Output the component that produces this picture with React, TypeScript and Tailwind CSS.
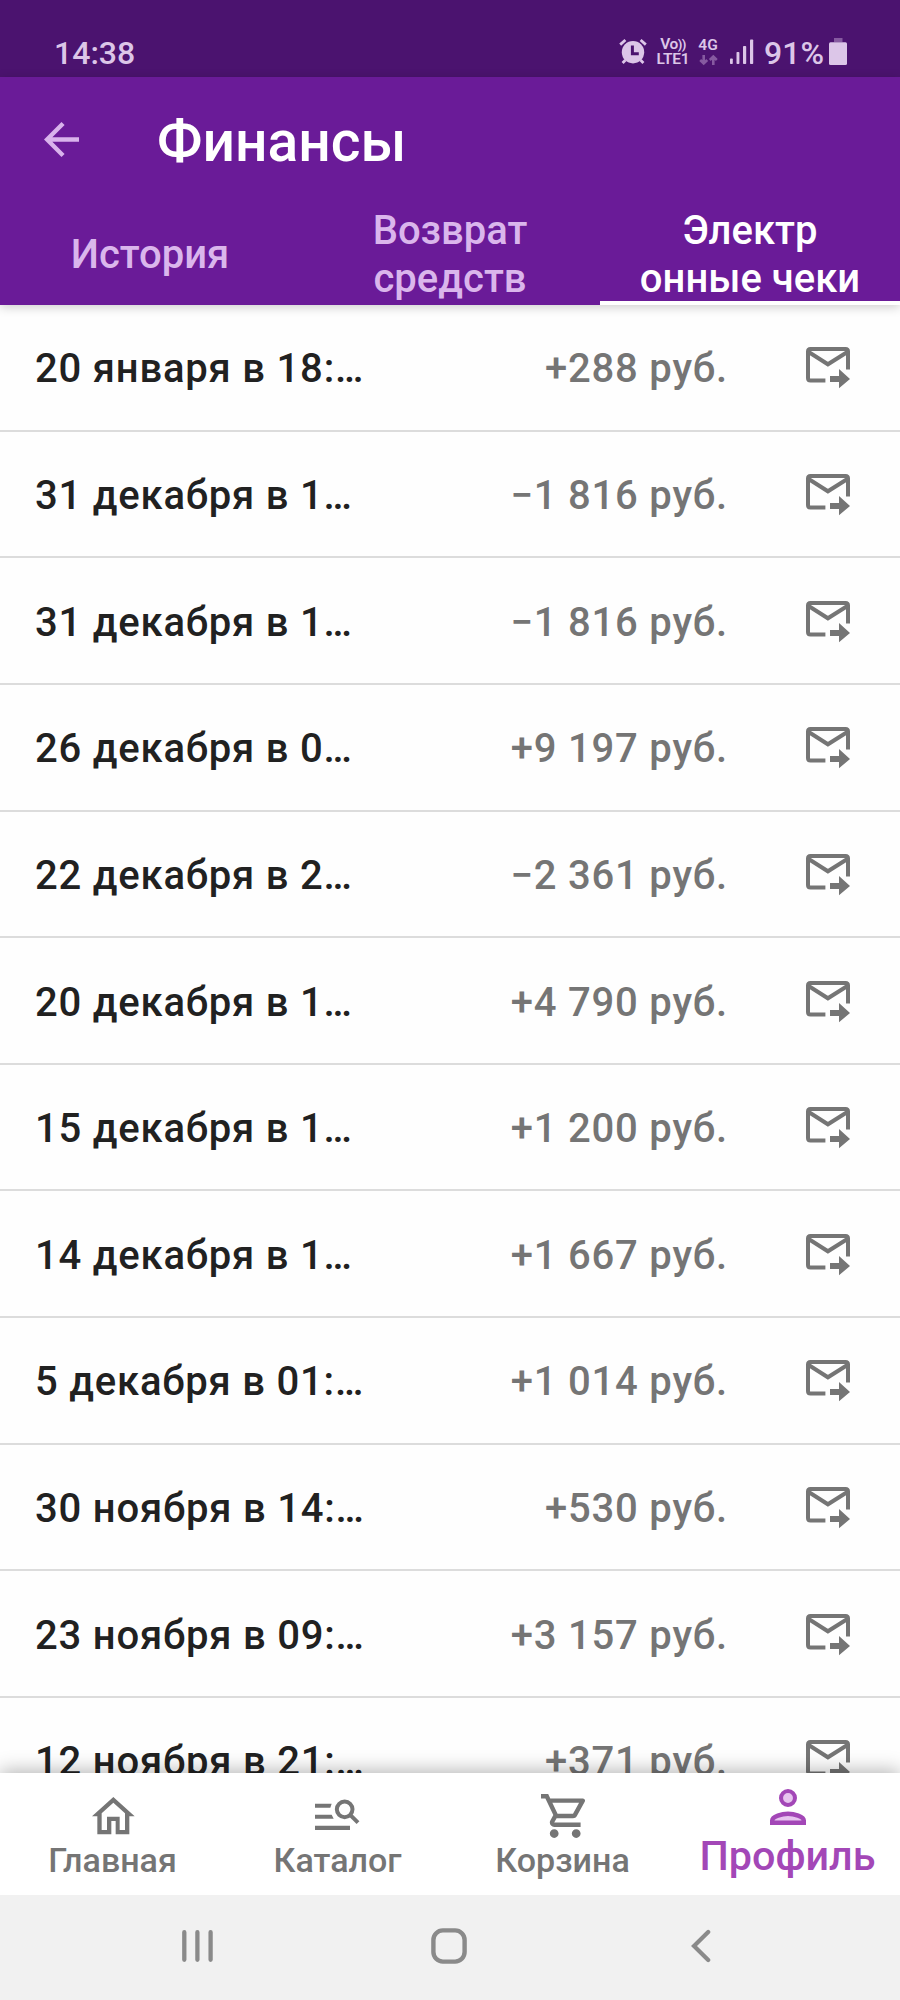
import React from "react";

type Receipt = { date: string; amount: string };

const receipts: Receipt[] = [
  { date: "20 января в 18:…", amount: "+288 руб." },
  { date: "31 декабря в 1…", amount: "−1 816 руб." },
  { date: "31 декабря в 1…", amount: "−1 816 руб." },
  { date: "26 декабря в 0…", amount: "+9 197 руб." },
  { date: "22 декабря в 2…", amount: "−2 361 руб." },
  { date: "20 декабря в 1…", amount: "+4 790 руб." },
  { date: "15 декабря в 1…", amount: "+1 200 руб." },
  { date: "14 декабря в 1…", amount: "+1 667 руб." },
  { date: "5 декабря в 01:…", amount: "+1 014 руб." },
  { date: "30 ноября в 14:…", amount: "+530 руб." },
  { date: "23 ноября в 09:…", amount: "+3 157 руб." },
  { date: "12 ноября в 21:…", amount: "+371 руб." },
];

function AlarmIcon() {
  return (
    <svg className="h-[27px] w-[28px]" viewBox="0 0 28 27" fill="none" stroke="currentColor">
      <path d="M1.2 6.6 6.4 2M26.8 6.6 21.600 2" strokeWidth="2.8" />
      <path d="M6.500 22 3.600 25M21.500 22l2.900 3" strokeWidth="2.8" />
      <circle cx="14" cy="14.2" r="11.2" fill="currentColor" stroke="none" />
      <path d="M13.4 7.400v8.300h6.4" stroke="#4b136f" strokeWidth="3" />
    </svg>
  );
}

function StatusBar() {
  return (
    <div className="flex h-[77px] shrink-0 items-start justify-between bg-[#4b136f] pl-[54px] pr-[53px] text-[#dcc6e8]">
      <span className="mt-[34px] text-[32px] leading-[38px] font-medium">14:38</span>
      <div className="mt-[34px] flex h-[38px] items-start">
        <div className="mt-[4px] flex">
          <AlarmIcon />
        </div>
        <div className="mt-[3px] ml-[9px] flex w-[34px] flex-col items-center text-[15.5px] leading-[15px] font-semibold">
          <span className="flex items-center tracking-[-0.5px]">
            Vo<span className="text-[13px] font-bold">))</span>
          </span>
          <span className="tracking-[-0.2px]">LTE1</span>
        </div>
        <div className="mt-[4px] ml-[8px] flex w-[20px] flex-col items-center text-[15.5px] leading-[15px] font-semibold">
          <span>4G</span>
          <svg className="mt-[1px] h-[12px] w-[19px]" viewBox="0 0 19 12" fill="none" stroke="#865aa0" strokeWidth="2.6">
            <path d="M4.700 1v8.500M1.200 6 4.700 9.500 8.200 6M14.300 11V2.500M10.800 6l3.500-3.500L17.800 6" />
          </svg>
        </div>
        <svg className="mt-[5px] ml-[12px] h-[25px] w-[24px]" viewBox="0 0 24 25" fill="currentColor">
          <rect x="0" y="19.500" width="2.800" height="5.500" rx="0.800" />
          <rect x="6.500" y="13" width="2.900" height="12" rx="0.800" />
          <rect x="13" y="7" width="3.200" height="18" rx="0.800" />
          <rect x="20" y="0.500" width="3.200" height="24.500" rx="0.800" />
        </svg>
        <span className="ml-[10px] text-[32px] leading-[38px] font-medium">91%</span>
        <svg className="mt-[4px] ml-[5px] h-[27px] w-[18px]" viewBox="0 0 18 27" fill="currentColor">
          <rect x="5" y="0" width="8.500" height="4" fill="#865aa0" />
          <path d="M1.500 4.200h15q1.500 0 1.500 1.500V25.500q0 1.500-1.500 1.500h-15Q0 27 0 25.500V5.700q0-1.500 1.500-1.500z" />
        </svg>
      </div>
    </div>
  );
}

function Header() {
  return (
    <header className="relative z-10 flex h-[228px] shrink-0 flex-col bg-[#6a1b98] shadow-[0_2px_10px_rgba(0,0,0,0.2)]">
      <div className="flex h-[125px] items-center pl-[44px]">
        <svg className="h-[35px] w-[35px] text-[#d9b3ec]" viewBox="4 4 16 16" fill="currentColor">
          <path d="M20 11H7.830l5.590-5.590L12 4l-8 8 8 8 1.410-1.410L7.830 13H20v-2z" />
        </svg>
        <h1 className="ml-[78px] mt-[4px] text-[57px] leading-[68px] font-medium text-white">Финансы</h1>
      </div>
      <nav className="grid h-[103px] grid-cols-3 text-center text-[40px] leading-[47.5px] font-medium text-[#dab6ec]">
        <div className="flex items-center justify-center pt-[2px]">История</div>
        <div className="flex items-center justify-center pt-[2px]">
          <span>
            Возврат
            <br />
            средств
          </span>
        </div>
        <div className="flex flex-col items-center justify-between text-white">
          <span className="mt-[5px] -mb-[4px]">
            Электр
            <br />
            онные чеки
          </span>
          <i className="h-[4px] w-full bg-white" />
        </div>
      </nav>
    </header>
  );
}

function MailForwardIcon() {
  return (
    <svg className="h-[42px] w-[44px]" viewBox="0 0 44 42" fill="none" stroke="currentColor" strokeWidth="4">
      <path d="M19.400 33.500H4.500Q2 33.500 2 31V4.500Q2 2 4.500 2h35Q42 2 42 4.500V22.500" />
      <path d="M3 5.200 21.900 17.300 41 5.200" />
      <path d="M24 29h9v-7L44 32 33 41.300V35h-9z" fill="currentColor" stroke="none" />
    </svg>
  );
}

function ReceiptRow({ date, amount }: Receipt) {
  return (
    <li className="flex h-[126.650px] shrink-0 items-center border-b-2 border-[#dcdcdc] pl-[35px] pr-[50px] text-[40px] leading-[48px] font-medium tracking-[0.8px]">
      <span className="flex-1 pt-[4px] text-[#212121]">{date}</span>
      <span className="pt-[4px] text-[#757575]">{amount}</span>
      <span className="ml-[78px] flex pt-[2px] text-[#757575]">
        <MailForwardIcon />
      </span>
    </li>
  );
}

function BottomNav() {
  return (
    <nav className="relative z-10 grid h-[122px] shrink-0 grid-cols-4 bg-white text-[34px] leading-[40px] font-medium text-[#757575] shadow-[0_-2px_18px_rgba(0,0,0,0.300)]">
      <div className="flex flex-col items-center">
        <svg className="mt-[24px] h-[38px] w-[44px]" viewBox="0 0 132 114" fill="currentColor">
          <path
            fillRule="evenodd"
            d="M67 0 131 58H115V112H74V72H61V112H19V58H3ZM67 17 102 49V99H86V59H48V99H32V49Z"
          />
        </svg>
        <span className="mt-[5px]">Главная</span>
      </div>
      <div className="flex flex-col items-center">
        <svg className="mt-[26px] h-[32px] w-[45px]" viewBox="0 0 135 96" fill="currentColor">
          <path d="M0 14h50l-4 12H0zM0 47h50l6 12H0zM0 80h105v13H0z" />
          <circle cx="89" cy="31" r="23.500" fill="none" stroke="currentColor" strokeWidth="12" />
          <path d="M104 46 129 71" stroke="currentColor" strokeWidth="12" />
        </svg>
        <span className="mt-[9px]">Каталог</span>
      </div>
      <div className="flex flex-col items-center">
        <svg className="mt-[21px] h-[44px] w-[44px]" viewBox="1 2 20 20" fill="currentColor">
          <path d="M15.550 13c.75 0 1.410-.41 1.750-1.030l3.580-6.490C21.250 4.820 20.770 4 20.010 4H5.210l-.94-2H1v2h2l3.600 7.590-1.350 2.440C4.520 15.370 5.480 17 7 17h12v-2H7l1.100-2h7.450zM6.160 6h12.150l-2.760 5H8.530L6.160 6zM7 18c-1.100 0-1.990.9-1.990 2S5.900 22 7 22s2-.9 2-2-.9-2-2-2zm10 0c-1.100 0-1.990.9-1.990 2s.89 2 1.990 2 2-.9 2-2-.9-2-2-2z" />
        </svg>
        <span className="mt-[2px]">Корзина</span>
      </div>
      <div className="flex flex-col items-center text-[41.300px] leading-[48px] text-[#a347b7]">
        <svg className="mt-[16px] h-[36px] w-[36px]" viewBox="4 4 16 16" fill="none" stroke="currentColor">
          <circle cx="12" cy="8" r="3.100" fill="#e7c4ef" strokeWidth="1.800" />
          <path d="M5 19v-1c0-1.700 4.300-3 7-3s7 1.300 7 3v1z" fill="#e7c4ef" strokeWidth="2" />
        </svg>
        <span className="mt-[7px]">Профиль</span>
      </div>
    </nav>
  );
}

function SystemBar() {
  return (
    <div className="relative z-20 flex h-[105px] shrink-0 items-center bg-[#f1f1f1] pb-[4px] pl-[182px] text-[#8a8a8a]">
      <svg className="h-[34px] w-[31px]" viewBox="0 0 31 34" stroke="currentColor" strokeWidth="4.300" strokeLinecap="round">
        <path d="M2.300 3.200v27.600M15.400 3.200v27.600M28.600 3.200v27.600" />
      </svg>
      <svg className="ml-[218px] h-[36px] w-[36px]" viewBox="0 0 36 36" fill="none" stroke="currentColor" strokeWidth="4.400">
        <rect x="2.400" y="2.400" width="31.200" height="31.200" rx="9.500" />
      </svg>
      <svg className="ml-[224px] h-[34px] w-[20px]" viewBox="0 0 20 34" fill="none" stroke="currentColor" strokeWidth="4.200" strokeLinecap="round">
        <path d="M17.200 3 3 17l14.200 14" />
      </svg>
    </div>
  );
}

export default function App() {
  return (
    <div className="flex h-[2000px] w-[900px] flex-col overflow-hidden bg-white font-['Roboto',sans-serif]">
      <StatusBar />
      <Header />
      <ul className="flex min-h-0 flex-1 flex-col overflow-hidden bg-[#fefefe]">
        {receipts.map((r, i) => (
          <ReceiptRow key={i} {...r} />
        ))}
      </ul>
      <BottomNav />
      <SystemBar />
    </div>
  );
}
